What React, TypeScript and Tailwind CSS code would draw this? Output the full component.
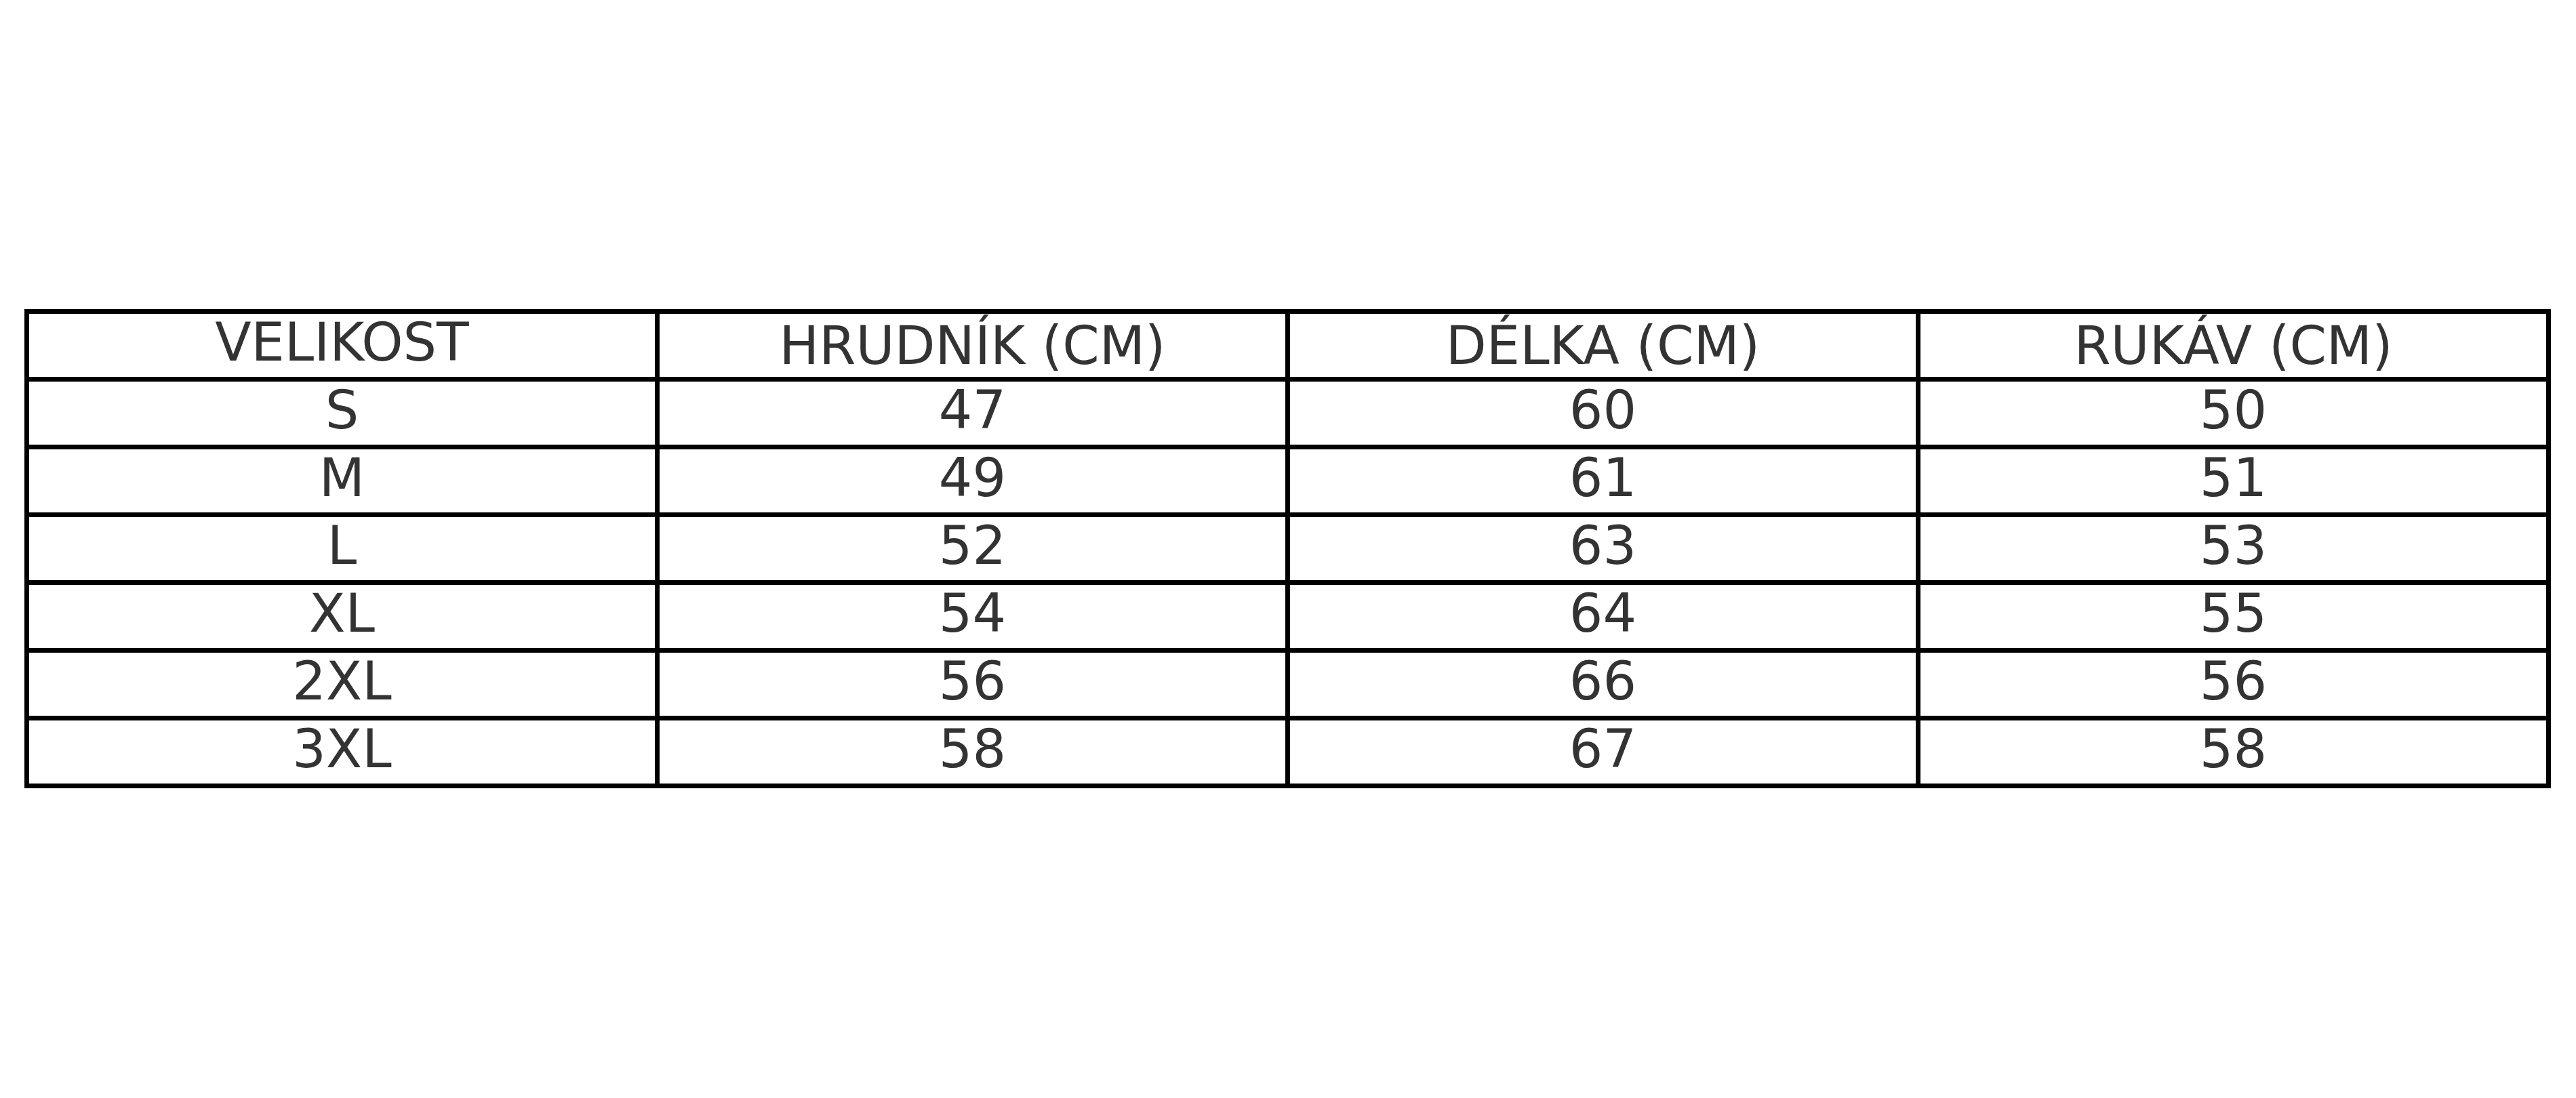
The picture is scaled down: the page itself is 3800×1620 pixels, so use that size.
const headers = ["VELIKOST", "HRUDNÍK (CM)", "DÉLKA (CM)", "RUKÁV (CM)"];

const rows = [
  ["S", "47", "60", "50"],
  ["M", "49", "61", "51"],
  ["L", "52", "63", "53"],
  ["XL", "54", "64", "55"],
  ["2XL", "56", "66", "56"],
  ["3XL", "58", "67", "58"],
];

export default function App() {
  return (
    <div className="w-[3800px] h-[1620px] bg-white pl-[36px] pt-[456px] font-['DejaVu_Sans',sans-serif] text-[#333333]">
      <div className="w-[3727px] grid grid-cols-4 gap-[7px] p-[7px] bg-black">
        {/* cabecera */}
        {headers.map((h, i) => (
          <div
            key={h}
            className={
              "h-[93px] bg-white text-center text-[78px] leading-none " +
              (i === 0 ? "pt-[3px]" : "pt-[8px]")
            }
          >
            {h}
          </div>
        ))}
        {/* filas */}
        {rows.map((r) =>
          r.map((c, j) => (
            <div key={r[0] + j} className="h-[93px] bg-white text-center text-[78px] leading-none pt-[3px]">
              {c}
            </div>
          ))
        )}
      </div>
    </div>
  );
}
